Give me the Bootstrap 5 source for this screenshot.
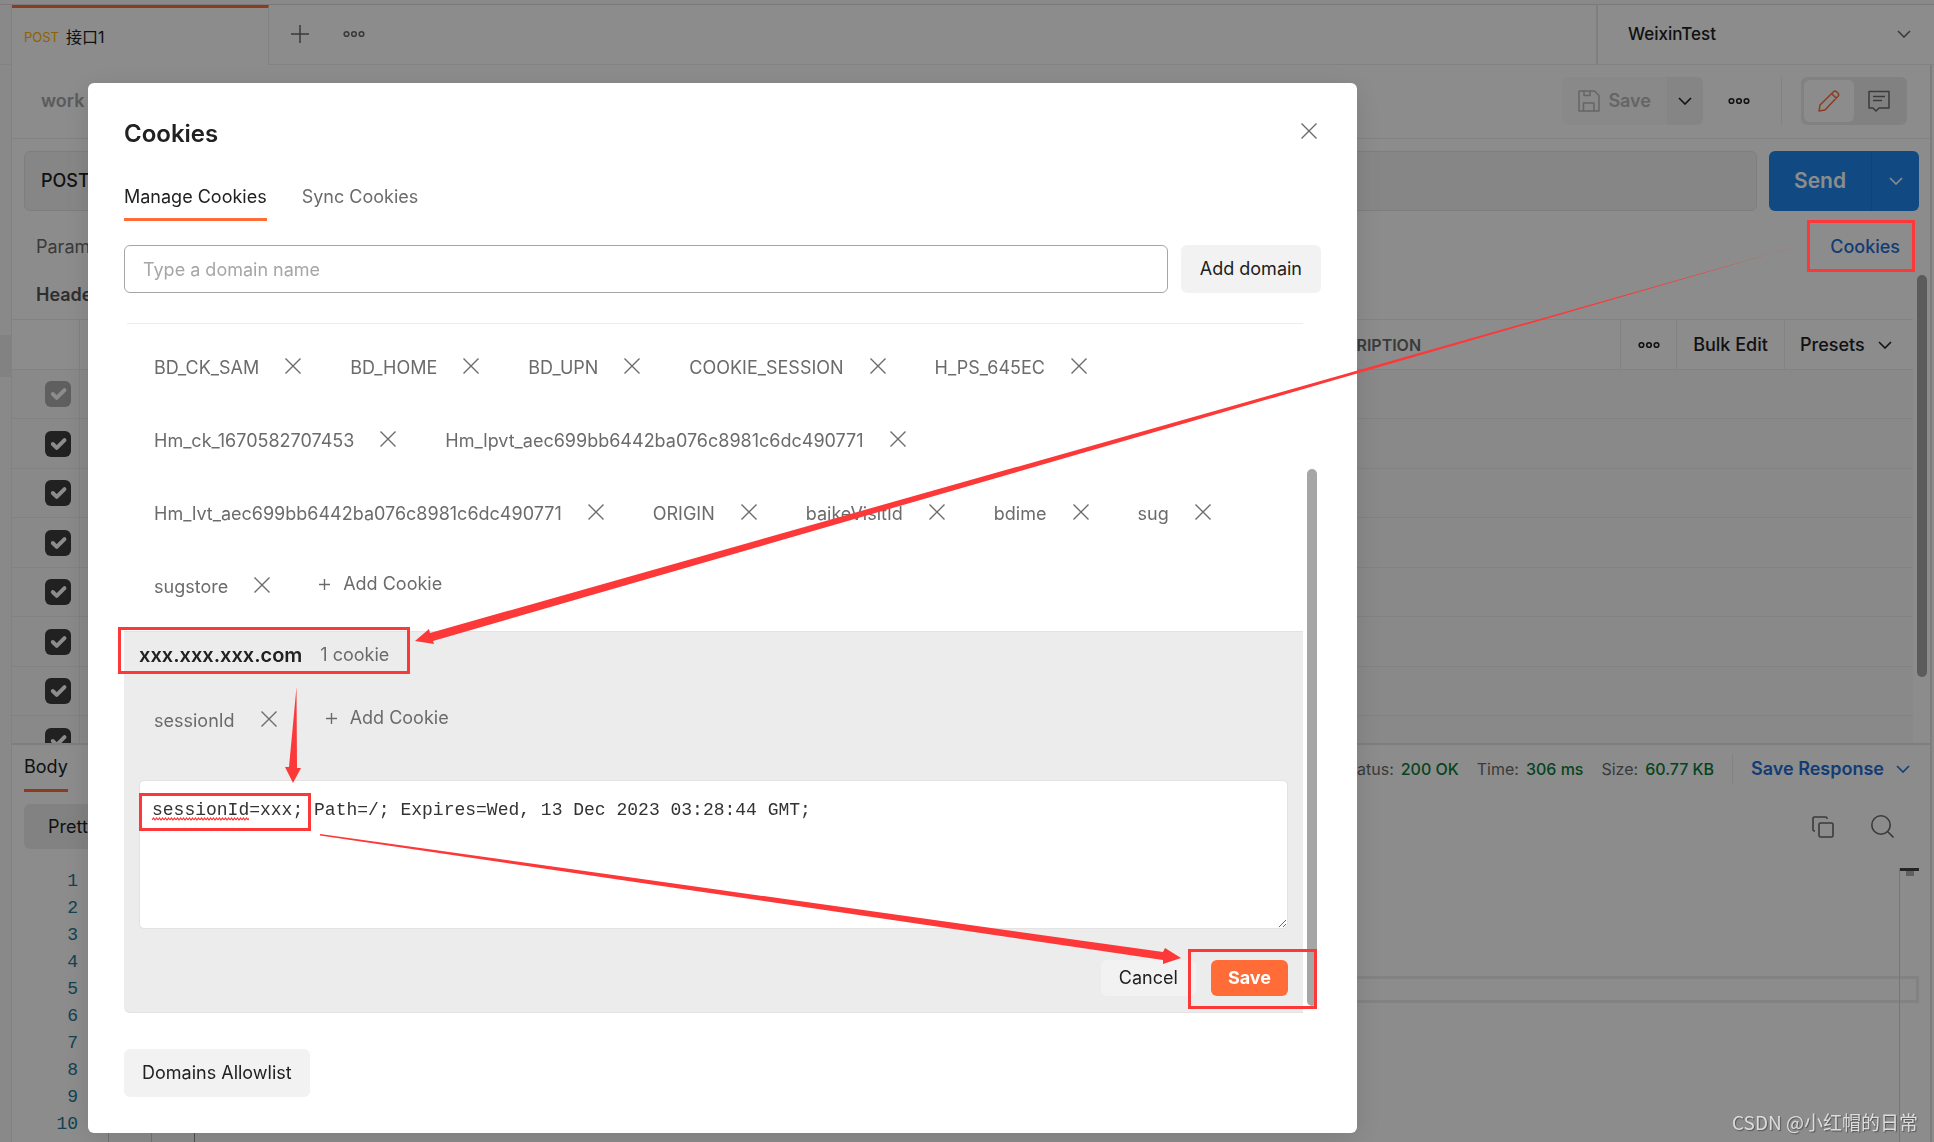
<!DOCTYPE html>
<html lang="zh-CN">
<head>
<meta charset="utf-8">
<meta name="viewport" content="width=device-width, initial-scale=1">
<title>Cookies</title>
<link rel="stylesheet" href="https://cdn.jsdelivr.net/npm/bootstrap@5.3.0/dist/css/bootstrap.min.css">
<style>
  :root { --ink: #212121; --soft: #6b6b6b; --line: #ededed; --accent: #ff6c37; --blue: #1f6fd6; --mark: #fc3838; }
  body { font: 400 18px/24px Inter, "Noto Sans CJK SC", sans-serif; color: var(--ink); overflow: hidden; }
  svg { display: block; fill: none; stroke: currentColor; flex: none; }
  .btn, .form-control { font-size: 18px; line-height: 24px; border-radius: 6px; }
  .btn { --bs-btn-color: var(--ink); --bs-btn-border-width: 0px; --bs-btn-padding-y: 0px; --bs-btn-padding-x: 0px; }
  a { text-decoration: none; }
  .soft { color: var(--soft); }
  .medium { font-weight: 500; }

  /* application shell */
  .top-strip { height: 5px; border-bottom: 1px solid #dfdfdf; background: #fafafa; }
  .side-rail { width: 12px; border-right: 1px solid var(--line); background: #fafafa; }
  .side-head { height: 60px; border-bottom: 1px solid var(--line); }
  .side-active { height: 42px; margin-top: 270px; background: #ededed; }
  .right-rail { width: 4px; border-left: 2px solid #e4e4e4; }
  .tab-bar { height: 60px; }
  .req-tab { width: 257px; padding: 0 12px; border-top: 3px solid var(--accent); border-right: 1px solid var(--line); font-size: 16px; gap: 7px; }
  .req-tab small { font-size: 13px; color: #ffb400; }
  .tab-tools { border-bottom: 1px solid var(--line); padding: 0 22px 2px; gap: 34px; }
  .env-select { width: 338px; border-left: 2px solid #e8e8e8; border-bottom: 1px solid var(--line); padding: 0 23px 2px 30px; font-size: 17px; font-weight: 500; }
  .title-row { height: 74px; border-bottom: 1px solid var(--line); padding: 0 23px 1px 29px; }
  .crumb { color: #a6a6a6; font-weight: 600; }
  .save-btn { height: 48px; padding: 0 16px; gap: 8px; color: #b8b8b8; background: #fafafa; font-weight: 600; border-radius: 6px 0 0 6px; }
  .caret-btn { width: 36px; height: 48px; background: #f2f2f2; border-radius: 0 6px 6px 0; margin-right: 25px; }
  .v-line { width: 1px; height: 30px; background: var(--line); align-self: center; }
  .v-line.tall { height: 48px; margin: 0 19px 0 31px; }
  .mode-switch { padding: 3px; border-radius: 6px; background: #ececec; }
  .mode-switch .btn { width: 50px; height: 42px; }
  .mode-switch .btn.active { background: #fff; color: var(--accent); }
  .url-row { padding: 12px 11px 0 12px; gap: 12px; }
  .url-box { height: 60px; border: 1px solid #e6e6e6; background: #f5f5f5; border-radius: 6px; padding: 0 16px; font-weight: 500; }
  .send-box .btn { height: 60px; background: #1f86ed; color: #fff; }
  .send-box .send-main { width: 102px; font-size: 21px; font-weight: 600; border-radius: 6px 0 0 6px; }
  .send-box .send-caret { width: 48px; border-left: 1px solid #1c7cdc; border-radius: 0 6px 6px 0; }
  .params-row { height: 72px; padding: 0 30px 0 24px; }
  .cookies-link { color: var(--blue); font-weight: 500; }
  .headers-row { height: 36px; padding-left: 24px; font-weight: 600; color: #555; }

  .header-pane { height: 426px; border-bottom: 2px solid #e6e6e6; padding-right: 17px; }
  .header-grid { table-layout: fixed; width: 100%; border-collapse: separate; border-spacing: 0; border-top: 1px solid var(--line); }
  .header-grid th, .header-grid td { height: 49px; padding: 0 12px; border-bottom: 1px solid var(--line); }
  .header-grid th { height: 50px; font-size: 16px; font-weight: 600; color: var(--soft); border-right: 1px solid var(--line); }
  .header-grid th.tool { padding: 0; }
  .header-grid th:last-child { border-right: 0; }
  .header-grid tbody tr:nth-child(even) td { height: 50px; }
  .header-grid td { background: #f9f9f9; }
  .header-grid td.tick { border-right: 1px solid var(--line); padding: 0 0 0 33px; }
  .header-grid .form-check-input { display: block; width: 26px; height: 26px; margin: 0; border-radius: 6px; border: 0; background-color: #3c3c3c; opacity: 1; }
  .header-grid .form-check-input:disabled { background-color: #adadad; }
  .presets { gap: 13px; padding-left: 15px; }
  .pane-thumb { position: absolute; right: 7px; top: 275px; width: 10px; height: 402px; border-radius: 5px; background: #a6a6a6; }

  .status-row { padding: 0 20px 0 12px; gap: 18px; }
  .body-tab { padding: 10px 0; border-bottom: 3px solid var(--accent); }
  .stat { font-size: 16px; gap: 7px; color: var(--soft); }
  .stat b { color: #0a7c3b; font-weight: 500; }
  .save-resp { color: var(--blue); font-weight: 600; gap: 12px; }
  .view-row { margin-top: 12px; padding: 0 36px 0 12px; gap: 37px; }
  .pretty { height: 45px; padding: 0 24px; background: #ededed; }
  .code-pane { margin-top: 19px; }
  .code-row { height: 27px; line-height: 27px; font-family: "Liberation Mono", monospace; }
  .line-no { width: 66px; text-align: right; color: #237893; }
  .code-text { margin: 0 11px 0 30px; border-left: 1px solid #d3d3d3; }
  .code-text i { width: 43px; border-right: 1px solid #d3d3d3; }
  .code-text i.deep { border-color: #939393; }
  .code-row.current .code-text { border: 3px solid #ededed; }
  .minimap { width: 20px; border-left: 1px solid #d8d8d8; position: absolute; right: 11px; top: 0; bottom: 0; }
  .minimap::before { content: ""; display: block; height: 3px; background: #444; }
  .minimap::after { content: ""; display: block; width: 8px; height: 5px; margin: 0 auto; background: #b0b0b0; }

  /* dialog */
  .modal-backdrop.show { opacity: .45; }
  .cookie-dialog { max-width: none; margin: 83px 577px 0 88px; }
  .cookie-dialog .modal-content { border: 0; border-radius: 6px; padding: 36px; box-shadow: 0 6px 30px rgba(0,0,0,.12); color: var(--ink); }
  .dialog-title { font-size: 24px; line-height: 30px; font-weight: 600; margin: 0; }
  .dialog-close { margin: -6px 4px 0 0; color: var(--soft); }
  .dialog-tabs { margin-top: 36px; gap: 35px; }
  .dialog-tabs .nav-link { padding: 0 0 9px; color: var(--soft); border-bottom: 3px solid transparent; }
  .dialog-tabs .nav-link.active { color: var(--ink); border-color: var(--accent); }
  .domain-form { margin-top: 24px; gap: 13px; }
  .domain-form .form-control { height: 48px; padding: 0 18px; border: 1px solid #a6a6a6; }
  .domain-form .form-control::placeholder { color: #a6a6a6; }
  .gray-btn { height: 48px; padding: 0 19px; background: #f2f2f2; }
  .domain-list { margin-top: 30px; }
  .scroll-thumb { width: 10px; margin: 146px 4px 7px; border-radius: 5px; background: #a6a6a6; }
  .first-group { margin-left: 3px; border-top: 1px solid #ececec; padding: 32px 0 32px 27px; }
  .cookie-chips { gap: 49px; }
  .chip { gap: 26px; color: var(--soft); }
  .chip .btn { color: var(--soft); margin-bottom: 4px; }
  .add-cookie { color: var(--soft); margin: -3px 0 3px; gap: 13px; }
  .open-group { background: #ececec; border: solid #e3e3e3; border-width: 1px 0; border-radius: 0 0 0 6px; padding: 11px 15px 16px; }
  .domain-name { font-size: 20px; line-height: 24px; font-weight: 600; margin: 0 18px 0 0; }
  .open-group .cookie-chips { margin: 42px 0 47px 15px; }
  .cookie-text.form-control { height: 149px; padding: 17px 12px; border: 1px solid #e3e3e3; font-family: "Liberation Mono", monospace; resize: vertical; border-radius: 5px; color: #333; }
  .dialog-actions { margin-top: 31px; gap: 15px; }
  .dialog-actions .btn { height: 36px; padding: 0 18px; background: #f2f2f2; }
  .dialog-actions .save-main { background: var(--accent); color: #fff; font-weight: 700; padding: 0 17px; }
  .allow-btn { margin-top: 36px; padding: 0 18px; }

  /* red marks drawn over the page */
  .marks { position: fixed; left: 0; top: 0; z-index: 1070; pointer-events: none; color: var(--mark); }
  .watermark { position: fixed; right: 16px; bottom: 8px; z-index: 1071; font: 19px/24px "Noto Sans CJK SC", sans-serif; color: #dcdcdc; text-shadow: 1px 1px 1px #555; }
</style>
<script src="https://cdn.jsdelivr.net/npm/bootstrap@5.3.0/dist/js/bootstrap.bundle.min.js"></script>
</head>
<body>
<svg width="0" height="0" class="position-absolute" aria-hidden="true">
  <symbol id="x" viewBox="0 0 16 16"><path d="M.5 .5l15 15M15.500 .5l-15 15" stroke-width="1.400"/></symbol>
  <symbol id="down" viewBox="0 0 14 8"><path d="M1 1l6 6 6-6" stroke-width="1.600"/></symbol>
  <symbol id="dots" viewBox="0 0 22 8"><g stroke-width="1.600"><circle cx="3.500" cy="4" r="2.300"/><circle cx="11" cy="4" r="2.300"/><circle cx="18.500" cy="4" r="2.300"/></g></symbol>
</svg>

<div class="vh-100 d-flex flex-column overflow-hidden">
  <div class="top-strip flex-shrink-0"></div>
  <div class="d-flex flex-grow-1">
    <aside class="side-rail flex-shrink-0"><div class="side-head"></div><div class="side-active"></div></aside>
    <main class="flex-grow-1 d-flex flex-column overflow-hidden">
      <div class="tab-bar d-flex">
        <div class="req-tab d-flex align-items-center"><small>POST</small><span>接口1</span></div>
        <div class="tab-tools d-flex align-items-center flex-grow-1">
          <button class="btn soft" aria-label="New tab"><svg width="18" height="18"><path d="M9 0v18M0 9h18" stroke-width="1.500"/></svg></button>
          <button class="btn soft" aria-label="Tab options"><svg width="22" height="8"><use href="#dots"/></svg></button>
        </div>
        <button class="btn env-select rounded-0 d-flex align-items-center justify-content-between">WeixinTest <svg class="soft" width="14" height="8"><use href="#down"/></svg></button>
      </div>
      <div class="d-flex flex-grow-1">
        <div class="flex-grow-1 d-flex flex-column">
          <div class="title-row d-flex align-items-center">
            <span class="crumb me-auto">work</span>
            <button class="btn save-btn d-flex align-items-center">
              <svg width="22" height="22" stroke-width="1.500"><path d="M1.500 1h15l4.500 4.500v15.500h-20v-19.500zM6 1v4.500h6v-4.500M5.500 21v-8h10.500v8" stroke-linejoin="round"/></svg>Save</button>
            <button class="btn caret-btn d-flex align-items-center justify-content-center" aria-label="Save options"><svg width="14" height="8"><use href="#down"/></svg></button>
            <button class="btn" aria-label="More"><svg width="22" height="8"><use href="#dots"/></svg></button>
            <span class="v-line tall"></span>
            <div class="mode-switch d-flex">
              <button class="btn active d-flex align-items-center justify-content-center" aria-label="Edit"><svg width="22" height="22" stroke-width="1.500" stroke-linejoin="round"><path d="M1 21l1-6L15.500 1.700q1.500-1.300 3 0l1.500 1.500q1.500 1.500 0 3L7 20zM13.500 3.500l5 5"/></svg></button>
              <button class="btn soft d-flex align-items-center justify-content-center" aria-label="Comments"><svg width="22" height="22" stroke-width="1.500" stroke-linejoin="round"><path d="M1 1.500h20v16.500H11l-3 3-3-3H1zM5 6.500h12M5 10.500h9"/></svg></button>
            </div>
          </div>
          <div class="url-row d-flex">
            <div class="url-box flex-grow-1 d-flex align-items-center">POST</div>
            <div class="send-box d-flex">
              <button class="btn send-main">Send</button>
              <button class="btn send-caret d-flex align-items-center justify-content-center" aria-label="Send options"><svg width="14" height="8"><use href="#down"/></svg></button>
            </div>
          </div>
          <div class="params-row d-flex align-items-center justify-content-between">
            <a href="#" class="soft">Params</a>
            <a href="#" class="cookies-link">Cookies</a>
          </div>
          <div class="headers-row">Headers</div>
          <div class="header-pane overflow-hidden">
            <table class="header-grid">
              <colgroup><col style="width:68px"><col><col><col style="width:320px"><col style="width:56px"><col style="width:108px"><col style="width:128px"></colgroup>
              <thead><tr><th></th><th>KEY</th><th>VALUE</th><th>DESCRIPTION</th>
                <th class="tool"><button class="btn d-block mx-auto" aria-label="Columns"><svg width="22" height="8"><use href="#dots"/></svg></button></th>
                <th class="tool text-center"><button class="btn medium">Bulk Edit</button></th>
                <th class="tool"><button class="btn presets medium d-flex align-items-center">Presets <svg width="14" height="8"><use href="#down"/></svg></button></th></tr></thead>
              <tbody>
                <tr><td class="tick"><input class="form-check-input" type="checkbox" checked disabled aria-label="Header 1"></td><td colspan="6"></td></tr>
                <tr><td class="tick"><input class="form-check-input" type="checkbox" checked aria-label="Header 2"></td><td colspan="6"></td></tr>
                <tr><td class="tick"><input class="form-check-input" type="checkbox" checked aria-label="Header 3"></td><td colspan="6"></td></tr>
                <tr><td class="tick"><input class="form-check-input" type="checkbox" checked aria-label="Header 4"></td><td colspan="6"></td></tr>
                <tr><td class="tick"><input class="form-check-input" type="checkbox" checked aria-label="Header 5"></td><td colspan="6"></td></tr>
                <tr><td class="tick"><input class="form-check-input" type="checkbox" checked aria-label="Header 6"></td><td colspan="6"></td></tr>
                <tr><td class="tick"><input class="form-check-input" type="checkbox" checked aria-label="Header 7"></td><td colspan="6"></td></tr>
                <tr><td class="tick"><input class="form-check-input" type="checkbox" checked aria-label="Header 8"></td><td colspan="6"></td></tr>
              </tbody>
            </table>
          </div>
          <div class="status-row d-flex align-items-center">
            <a href="#" class="body-tab text-reset me-auto">Body</a>
            <span class="stat d-flex">Status: <b>200 OK</b></span>
            <span class="stat d-flex">Time: <b>306 ms</b></span>
            <span class="stat d-flex">Size: <b>60.77 KB</b></span>
            <span class="v-line"></span>
            <button class="btn save-resp d-flex align-items-center">Save Response <svg width="14" height="8"><use href="#down"/></svg></button>
          </div>
          <div class="view-row d-flex align-items-center">
            <button class="btn pretty me-auto">Pretty</button>
            <button class="btn soft" aria-label="Copy"><svg width="22" height="22" stroke-width="1.600"><rect x="7" y="7" width="14" height="14" rx="1.500"/><path d="M3 15H2.500q-1.500 0-1.500-1.500v-11Q1 1 2.500 1h11Q15 1 15 2.500V3"/></svg></button>
            <button class="btn soft" aria-label="Search"><svg width="23" height="23" stroke-width="1.600"><circle cx="10" cy="10" r="9.200"/><path d="M16.500 16.500l6 6"/></svg></button>
          </div>
          <div class="code-pane position-relative flex-grow-1">
            <div class="code-row d-flex"><span class="line-no">1</span></div>
            <div class="code-row d-flex"><span class="line-no">2</span></div>
            <div class="code-row d-flex"><span class="line-no">3</span></div>
            <div class="code-row d-flex"><span class="line-no">4</span></div>
            <div class="code-row d-flex current"><span class="line-no">5</span><span class="code-text flex-grow-1"></span></div>
            <div class="code-row d-flex"><span class="line-no">6</span></div>
            <div class="code-row d-flex"><span class="line-no">7</span></div>
            <div class="code-row d-flex"><span class="line-no">8</span></div>
            <div class="code-row d-flex"><span class="line-no">9</span></div>
            <div class="code-row d-flex"><span class="line-no">10</span><span class="code-text d-flex"><i></i><i class="deep"></i></span></div>
            <div class="code-row d-flex"><span class="line-no"></span><span class="code-text d-flex"><i></i><i class="deep"></i></span></div>
            <div class="minimap"></div>
          </div>
        </div>
        <div class="right-rail flex-shrink-0"></div>
      </div>
    </main>
  </div>
  <div class="pane-thumb"></div>
</div>

<div class="modal-backdrop show"></div>
<div class="modal d-block" role="dialog" aria-labelledby="dlg">
  <div class="modal-dialog cookie-dialog">
    <div class="modal-content">
      <div class="d-flex justify-content-between align-items-center">
        <h1 class="dialog-title" id="dlg">Cookies</h1>
        <button class="btn dialog-close" aria-label="Close"><svg width="16" height="16"><use href="#x"/></svg></button>
      </div>
      <nav class="nav dialog-tabs">
        <a class="nav-link active" href="#">Manage Cookies</a>
        <a class="nav-link" href="#">Sync Cookies</a>
      </nav>
      <div class="domain-form d-flex">
        <input class="form-control flex-grow-1" type="text" placeholder="Type a domain name" aria-label="Domain name">
        <button class="btn gray-btn flex-shrink-0">Add domain</button>
      </div>
      <div class="domain-list d-flex">
        <div class="flex-grow-1">
          <div class="first-group">
            <div class="cookie-chips d-flex flex-wrap align-items-center">
              <span class="chip d-flex align-items-center">BD_CK_SAM <button class="btn" aria-label="Remove"><svg width="16" height="16"><use href="#x"/></svg></button></span>
              <span class="chip d-flex align-items-center">BD_HOME <button class="btn" aria-label="Remove"><svg width="16" height="16"><use href="#x"/></svg></button></span>
              <span class="chip d-flex align-items-center">BD_UPN <button class="btn" aria-label="Remove"><svg width="16" height="16"><use href="#x"/></svg></button></span>
              <span class="chip d-flex align-items-center">COOKIE_SESSION <button class="btn" aria-label="Remove"><svg width="16" height="16"><use href="#x"/></svg></button></span>
              <span class="chip d-flex align-items-center">H_PS_645EC <button class="btn" aria-label="Remove"><svg width="16" height="16"><use href="#x"/></svg></button></span>
              <span class="chip d-flex align-items-center">Hm_ck_1670582707453 <button class="btn" aria-label="Remove"><svg width="16" height="16"><use href="#x"/></svg></button></span>
              <span class="chip d-flex align-items-center">Hm_lpvt_aec699bb6442ba076c8981c6dc490771 <button class="btn" aria-label="Remove"><svg width="16" height="16"><use href="#x"/></svg></button></span>
              <span class="chip d-flex align-items-center">Hm_lvt_aec699bb6442ba076c8981c6dc490771 <button class="btn" aria-label="Remove"><svg width="16" height="16"><use href="#x"/></svg></button></span>
              <span class="chip d-flex align-items-center">ORIGIN <button class="btn" aria-label="Remove"><svg width="16" height="16"><use href="#x"/></svg></button></span>
              <span class="chip d-flex align-items-center">baikeVisitId <button class="btn" aria-label="Remove"><svg width="16" height="16"><use href="#x"/></svg></button></span>
              <span class="chip d-flex align-items-center">bdime <button class="btn" aria-label="Remove"><svg width="16" height="16"><use href="#x"/></svg></button></span>
              <span class="chip d-flex align-items-center">sug <button class="btn" aria-label="Remove"><svg width="16" height="16"><use href="#x"/></svg></button></span>
              <span class="chip d-flex align-items-center">sugstore <button class="btn" aria-label="Remove"><svg width="16" height="16"><use href="#x"/></svg></button></span>
              <button class="btn add-cookie d-flex align-items-center"><svg width="11" height="11"><path d="M5.500 0v11M0 5.500h11" stroke-width="1.400"/></svg>Add Cookie</button>
            </div>
          </div>
          <div class="open-group">
            <div class="d-flex align-items-center">
              <h2 class="domain-name">xxx.xxx.xxx.com</h2><span class="soft">1 cookie</span>
            </div>
            <div class="cookie-chips d-flex flex-wrap align-items-center">
              <span class="chip d-flex align-items-center">sessionId <button class="btn" aria-label="Remove"><svg width="16" height="16"><use href="#x"/></svg></button></span>
              <button class="btn add-cookie d-flex align-items-center"><svg width="11" height="11"><path d="M5.500 0v11M0 5.500h11" stroke-width="1.400"/></svg>Add Cookie</button>
            </div>
            <textarea class="form-control cookie-text" aria-label="Cookie value" spellcheck="false">sessionId=xxx; Path=/; Expires=Wed, 13 Dec 2023 03:28:44 GMT;</textarea>
            <div class="dialog-actions d-flex justify-content-end">
              <button class="btn">Cancel</button>
              <button class="btn save-main">Save</button>
            </div>
          </div>
        </div>
        <div class="scroll-thumb flex-shrink-0"></div>
      </div>
      <div><button class="btn gray-btn allow-btn">Domains Allowlist</button></div>
    </div>
  </div>
</div>

<svg class="marks" width="1934" height="1142" aria-hidden="true">
  <defs>
    <pattern id="wave" x="152" y="817" width="6" height="4" patternUnits="userSpaceOnUse"><path d="M0 3l1.500-2 1.500 2 1.500-2 1.500 2" stroke="#f33" stroke-width="1.200"/></pattern>
  </defs>
  <rect x="152" y="817" width="97" height="4" fill="url(#wave)" stroke="none"/>
  <g stroke-width="3">
    <rect x="1808.500" y="221.500" width="105" height="49"/>
    <rect x="119.500" y="628.500" width="289" height="44"/>
    <rect x="140.500" y="794.500" width="169" height="35"/>
    <rect x="1189.500" y="950.500" width="126" height="57"/>
  </g>
  <g fill="currentColor" stroke="none">
    <path d="M1794 247L430 633l-1-4-14 12 19 3-1-3z"/>
    <path d="M296.500 687L289 767h-4l8 16 8-15h-4z"/>
    <path d="M320 834L1163 952l2-4 16 10-18 6v-4L320 835.500z"/>
  </g>
</svg>
<div class="watermark">CSDN @小红帽的日常</div>
</body>
</html>
